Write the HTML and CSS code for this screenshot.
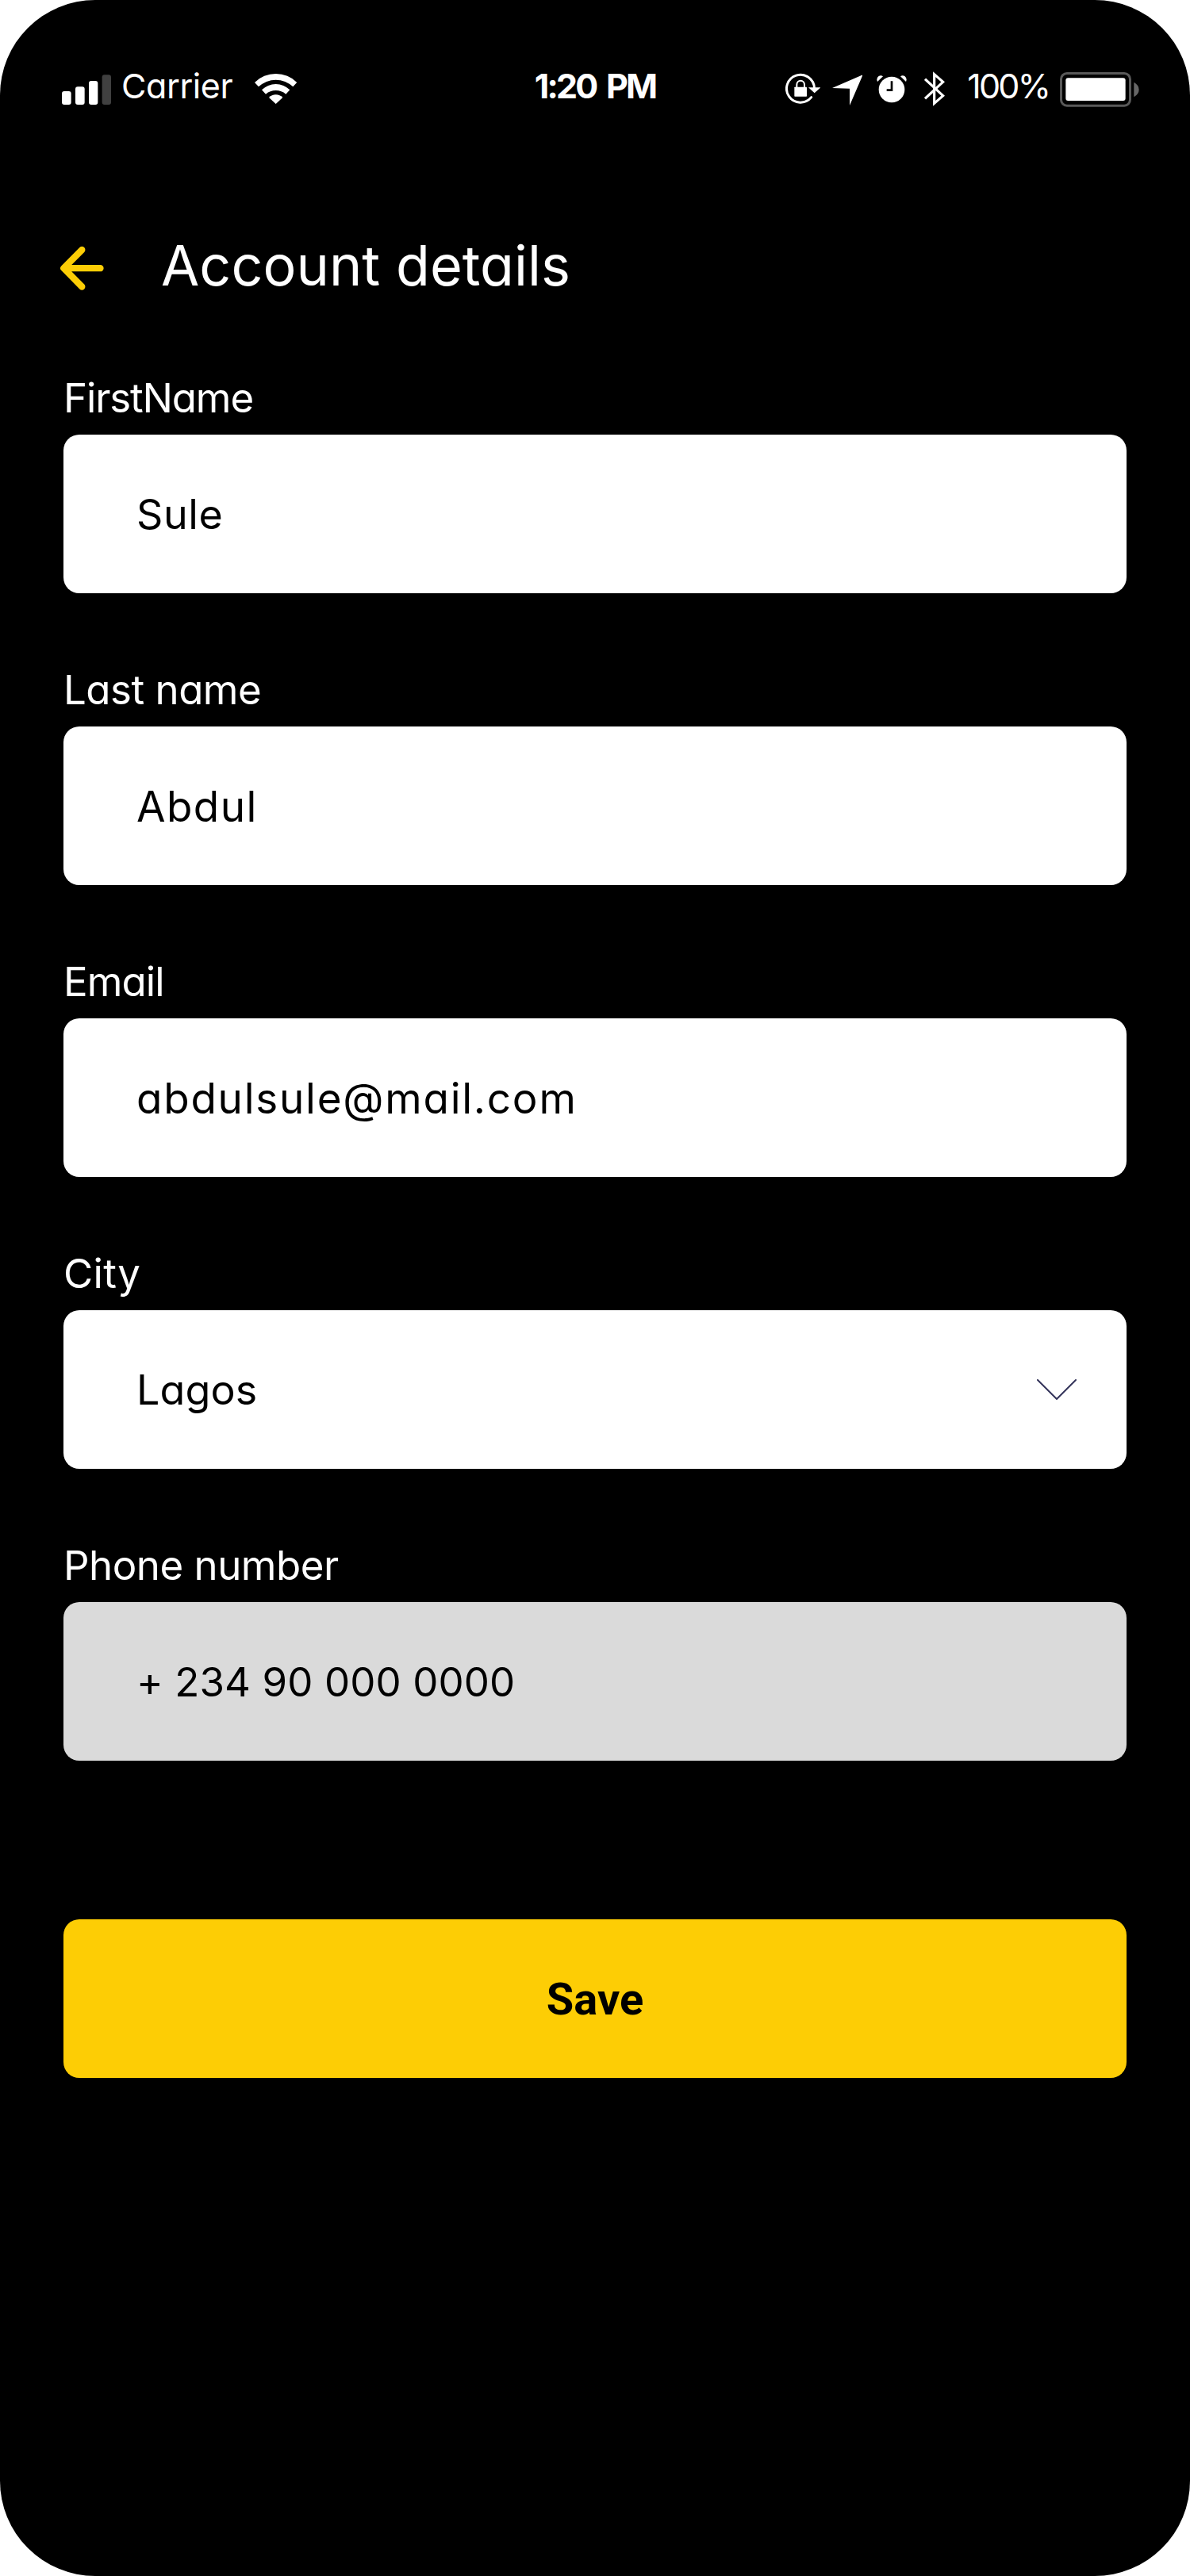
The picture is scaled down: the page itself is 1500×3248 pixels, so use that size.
FILE: index.html
```html
<!DOCTYPE html>
<html lang="en">
<head>
<meta charset="utf-8">
<title>Account details</title>
<link rel="stylesheet" href="styles.css">
</head>
<body>
<main class="screen">
  <div class="status">
    <div class="status-left">
      <svg class="ic" width="62" height="50" viewBox="54 48 186 150" fill="#fff">
        <rect x="54" y="135" width="35" height="51" rx="9"/>
        <rect x="105" y="118" width="35" height="68" rx="9"/>
        <rect x="156" y="96" width="34" height="90" rx="9"/>
        <rect x="206" y="73" width="34" height="113" rx="9" fill="#404040"/>
      </svg>
      <span class="carrier">Carrier</span>
      <svg class="ic" width="53.33" height="50" viewBox="783 48 160 150" fill="#fff">
        <path d="M783 102A113.5 113.5 0 0 1 943 102L928 118A94 94 0 0 0 798 118Z"/>
        <path d="M810 130A75 75 0 0 1 916 130L901 146A58.600 58.600 0 0 0 825 146Z"/>
        <path d="M837 159A36 36 0 0 1 889 159L863 183Z"/>
      </svg>
    </div>
    <span class="time">1:20 PM</span>
    <div class="status-right">
      <svg class="ic lock" width="44.33" height="50" viewBox="59 48 133 150">
        <path d="M157 158A52.500 52.500 0 1 1 168.500 124" fill="none" stroke="#fff" stroke-width="9" stroke-linecap="round"/>
        <path d="M146 121H192L169 142Z" fill="#fff"/>
        <rect x="93" y="119" width="47" height="36" rx="2" fill="#fff"/>
        <path d="M102 120V110A14.500 14.500 0 0 1 131 110V120" fill="none" stroke="#fff" stroke-width="6"/>
      </svg>
      <svg class="ic nav" width="38.67" height="50" viewBox="235 48 116 150" fill="#fff"><path d="M351 73L235 123L301 125V189Z"/></svg>
      <svg class="ic alarm" width="38" height="50" viewBox="404 48 114 150" fill="#fff">
        <circle cx="461" cy="129" r="49"/>
        <path d="M407 99Q402 86 411 79Q420 73 428 79Z"/>
        <path d="M515 99Q520 86 511 79Q502 73 494 79Z"/>
        <path d="M461 97V131H442" fill="none" stroke="#000" stroke-width="8"/>
      </svg>
      <svg class="ic" width="26" height="50" viewBox="585 48 78 150"><path d="M588 89L656 152L623 181V71L656 100L588 163" fill="none" stroke="#fff" stroke-width="9.500"/></svg>
      <span class="percent">100%</span>
      <svg class="ic" width="99.67" height="50" viewBox="409 48 299 150">
        <rect x="413.500" y="67.500" width="261" height="122" rx="22" fill="none" stroke="#595959" stroke-width="9"/>
        <rect x="431" y="85" width="226" height="86" rx="9" fill="#fff"/>
        <path d="M689 101Q708 112 708 129Q708 146 689 157Z" fill="#666"/>
      </svg>
    </div>
  </div>
  <header class="header">
    <svg class="back" width="58" height="60" viewBox="75 308 58 60" fill="none" stroke="#fdcd05" stroke-width="8.300" stroke-linecap="round" stroke-linejoin="round"><path d="M126.500 338.200H80.500M103.300 315L80.300 338.200L103.300 361.500"/></svg>
    <h1 class="title">Account details</h1>
  </header>
  <form class="form">
    <div class="field">
      <label class="label label-first">FirstName</label>
      <div class="box"><span class="value-first">Sule</span></div>
    </div>
    <div class="field">
      <label class="label label-last">Last name</label>
      <div class="box"><span class="value-last">Abdul</span></div>
    </div>
    <div class="field">
      <label class="label label-email">Email</label>
      <div class="box"><span class="value-email">abdulsule@mail.com</span></div>
    </div>
    <div class="field">
      <label class="label label-city">City</label>
      <div class="box">
        <span class="value-city">Lagos</span>
        <svg class="chevron" width="52" height="28" viewBox="0 0 52 28" fill="none" stroke="#34345a" stroke-width="2" stroke-linecap="round" stroke-linejoin="round"><path d="M2 1L26 25L50 1"/></svg>
      </div>
    </div>
    <div class="field">
      <label class="label label-phone">Phone number</label>
      <div class="box box-disabled"><span class="value-phone">+ 234 90 000 0000</span></div>
    </div>
    <button class="save" type="button">Save</button>
  </form>
</main>
</body>
</html>
```
FILE: styles.css
```css
* { box-sizing: border-box; }
body { margin: 0; background: #fff; font-family: Inter, "Liberation Sans", sans-serif; font-feature-settings: "cv11"; }
.screen { width: 1500px; height: 3248px; background: #000; border-radius: 120px; color: #fff; overflow: hidden; }

.status { display: grid; grid-template-columns: 1fr auto 1fr; padding: 86px 64px 0; height: 136px; font-size: 43px; line-height: 44px; white-space: nowrap; }
.status-left { display: flex; padding-left: 14px; }
.status-right { display: flex; justify-content: flex-end; }
.ic { display: block; flex: none; }
.carrier { width: 181px; padding-left: 13px; letter-spacing: -0.4px; }
.time { font-weight: 700; letter-spacing: -2.8px; word-spacing: 5px; }
.lock { margin-right: 14.3px; }
.nav { margin-right: 17.7px; }
.alarm { margin-right: 22.3px; }
.percent { width: 145px; padding-left: 28px; letter-spacing: -2.8px; }

.header { display: flex; align-items: flex-start; padding: 159px 75px 0; height: 336px; }
.back { display: block; flex: none; margin-top: 13px; }
.title { margin: 0 0 0 70px; font-size: 70px; line-height: 80px; font-weight: 400; letter-spacing: 0.05px; }

.form { display: flex; flex-direction: column; gap: 92px; padding: 0 80px; }
.field { display: flex; flex-direction: column; gap: 16px; }
.label { font-size: 51px; line-height: 60px; }
.label-first { letter-spacing: -1.15px; }
.label-last { letter-spacing: -0.5px; }
.label-email { letter-spacing: -0.9px; }
.label-city { letter-spacing: 0.3px; }
.label-phone { letter-spacing: -0.5px; }

.box { display: flex; align-items: center; justify-content: space-between; height: 200px; padding: 1px 62px 0 92px; border-radius: 20px; background: #fff; color: #000; font-size: 52px; }
.box-disabled { background: #dadada; font-size: 51px; }
.value-first { letter-spacing: 0.6px; }
.value-last { font-size: 53px; letter-spacing: 1.4px; }
.value-email { font-size: 53px; letter-spacing: 1.75px; }
.value-city { letter-spacing: 0.1px; }
.value-phone { letter-spacing: 0.1px; }
.chevron { position: relative; top: 0.5px; }

.save { height: 200px; margin-top: 108px; padding: 2px 0 0; border: 0; border-radius: 20px; background: #fdcd05; color: #000; font: 700 56px Roboto, sans-serif; }
```
